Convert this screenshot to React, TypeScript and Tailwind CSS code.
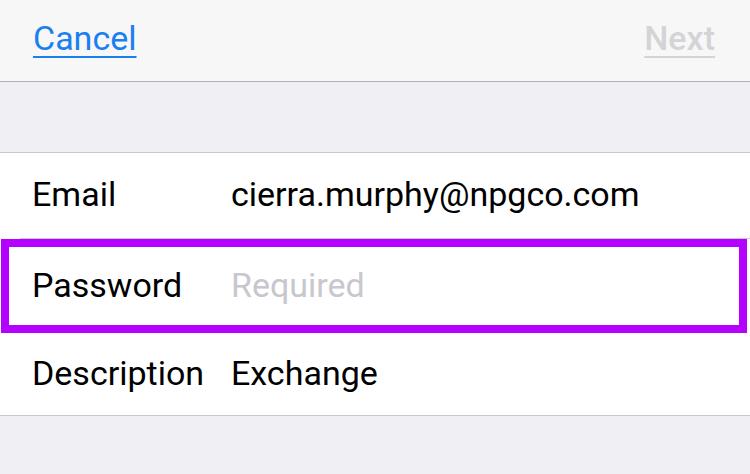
import React, { FC } from "react";

const rowText = "text-[34px] leading-none text-black";

const Row: FC<{ label: string; value: string; placeholder?: boolean }> = ({
  label,
  value,
  placeholder,
}) => (
  <div className="flex items-center h-full pb-[3px]">
    <div className={`w-[199px] ${rowText}`}>{label}</div>
    <div
      className={`text-[34px] leading-none ${
        placeholder ? "text-[#c7c7cd]" : "text-black"
      }`}
    >
      {value}
    </div>
  </div>
);

const App: FC = () => {
  return (
    <div className="w-[750px] h-[474px] overflow-hidden bg-[#efeff4] font-['Roboto','Liberation_Sans',sans-serif]">
      <div className="h-[82px] bg-[#f7f7f8] border-b border-[#b2b2b2] flex items-center justify-between pl-[33px] pr-[35px] pb-[6px]">
        <span className="text-[34px] leading-none text-[#1a7ff0] underline decoration-2 underline-offset-[6px]">
          Cancel
        </span>
        <span className="text-[34px] leading-none font-medium text-[#d4d4d6] underline decoration-2 underline-offset-[6px]">
          Next
        </span>
      </div>

      <div className="h-[70px]" />

      <div className="bg-white border-t border-b border-[#c8c7cc]">
        <div className="h-[85px] pl-[32px]">
          <Row label="Email" value="cierra.murphy@npgco.com" />
        </div>
        <div className="ml-[20px] h-px bg-[#c8c7cc]" />
        <div className="h-[94px] ml-px w-[746px] border-[8px] border-[#b300ff] pl-[23px]">
          <Row label="Password" value="Required" placeholder />
        </div>
        <div className="h-[82px] pl-[32px]">
          <Row label="Description" value="Exchange" />
        </div>
      </div>
    </div>
  );
};

export default App;
